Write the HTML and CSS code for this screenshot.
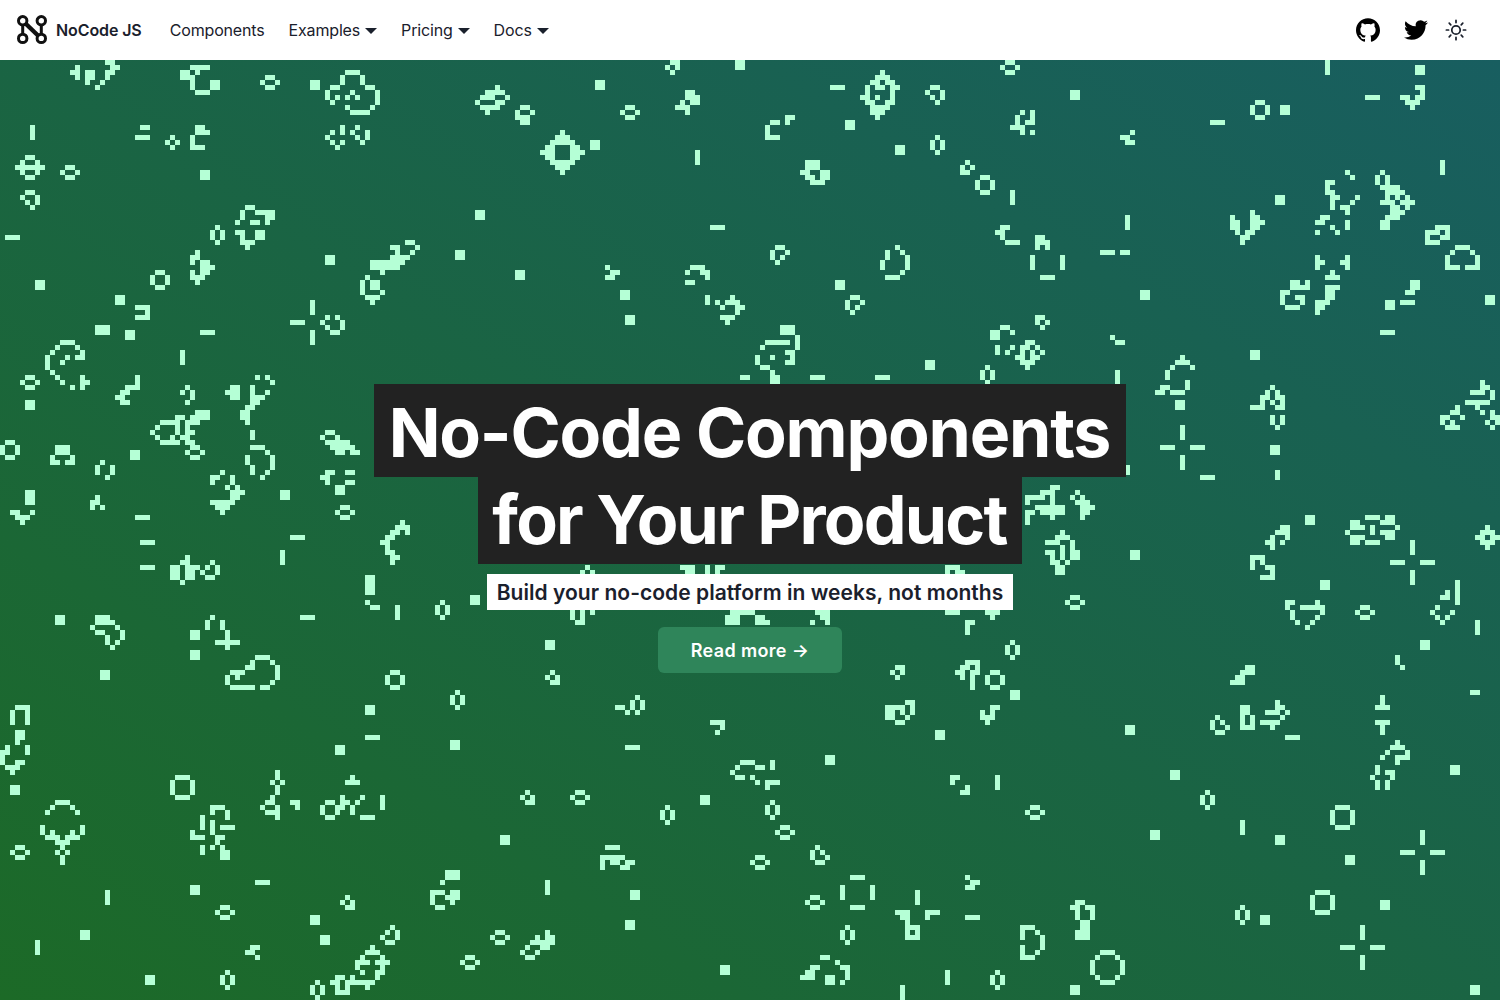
FILE: index.html
```html
<!DOCTYPE html>
<html lang="en">
<head>
<meta charset="utf-8">
<title>NoCode JS</title>
<link rel="stylesheet" href="styles.css">
</head>
<body>
<header class="nav">
  <a class="brand" href="#">
    <svg class="brand-mark" viewBox="0 0 32 32"><g fill="none" stroke="currentColor" stroke-width="3"><circle cx="6.7" cy="6.8" r="4.2"/><circle cx="25.3" cy="6.8" r="4.2"/><circle cx="6.7" cy="24.4" r="4.2"/><circle cx="25.3" cy="24.4" r="4.2"/><path d="M6.7 10v11M25.3 10v11"/><path stroke-width="4.4" d="M9.5 9.5l13 12.5"/></g></svg>
    <span>NoCode JS</span>
  </a>
  <nav class="links">
    <a href="#">Components</a>
    <a href="#">Examples<svg class="caret" viewBox="0 0 12 6"><path d="M0 0h12L6 6z"/></svg></a>
    <a href="#">Pricing<svg class="caret" viewBox="0 0 12 6"><path d="M0 0h12L6 6z"/></svg></a>
    <a href="#">Docs<svg class="caret" viewBox="0 0 12 6"><path d="M0 0h12L6 6z"/></svg></a>
  </nav>
  <div class="actions">
    <svg class="icon" viewBox="0 0 24 24"><path d="M12 .297c-6.63 0-12 5.373-12 12 0 5.303 3.438 9.8 8.205 11.385.6.113.82-.258.82-.577 0-.285-.01-1.04-.015-2.04-3.338.724-4.042-1.61-4.042-1.61C4.422 18.07 3.633 17.7 3.633 17.7c-1.087-.744.084-.729.084-.729 1.205.084 1.838 1.236 1.838 1.236 1.07 1.835 2.809 1.305 3.495.998.108-.776.417-1.305.76-1.605-2.665-.3-5.466-1.332-5.466-5.93 0-1.31.465-2.38 1.235-3.22-.135-.303-.54-1.523.105-3.176 0 0 1.005-.322 3.3 1.23.96-.267 1.98-.399 3-.405 1.02.006 2.04.138 3 .405 2.28-1.552 3.285-1.23 3.285-1.23.645 1.653.24 2.873.12 3.176.765.84 1.23 1.91 1.23 3.22 0 4.61-2.805 5.625-5.475 5.92.42.36.81 1.096.81 2.22 0 1.606-.015 2.896-.015 3.286 0 .315.21.69.825.57C20.565 22.092 24 17.592 24 12.297c0-6.627-5.373-12-12-12"/></svg>
    <svg class="icon" viewBox="0 0 24 24"><path d="M23.953 4.57a10 10 0 01-2.825.775 4.958 4.958 0 002.163-2.723c-.951.555-2.005.959-3.127 1.184a4.92 4.92 0 00-8.384 4.482C7.69 8.095 4.067 6.13 1.64 3.162a4.822 4.822 0 00-.666 2.475c0 1.71.87 3.213 2.188 4.096a4.904 4.904 0 01-2.228-.616v.06a4.923 4.923 0 003.946 4.827 4.996 4.996 0 01-2.212.085 4.936 4.936 0 004.604 3.417 9.867 9.867 0 01-6.102 2.105c-.39 0-.779-.023-1.17-.067a13.995 13.995 0 007.557 2.209c9.053 0 13.998-7.496 13.998-13.985 0-.21 0-.42-.015-.63A9.935 9.935 0 0024 4.59z"/></svg>
    <svg class="sun" viewBox="0 0 24 24"><circle cx="12" cy="12" r="4.6"/><path d="M12 1.5v2.4M12 20.1v2.4M4.6 4.6l1.7 1.7M17.7 17.7l1.7 1.7M1.5 12h2.4M20.1 12h2.4M4.6 19.4l1.7-1.7M17.7 6.3l1.7-1.7"/></svg>
  </div>
</header>
<main class="hero">
  <svg class="life" viewBox="0 11.5 300 188" aria-hidden="true">
    <path class="life-rows" d="M21 12h2M15 13h1M22 13h2M14 14h2M17 14h2M21 14h2M15 15h1M17 15h2M21 15h1M17 16h1M20 16h1M19 17h1
M38 13h4M36 14h2M39 14h1M36 15h3M38 16h1M38 17h1M39 18h3
M69 14h3M68 15h1M72 15h1M68 16h1M72 16h1M66 17h2M73 17h2M65 18h1M70 18h1M75 18h1M65 19h1M67 19h1M69 19h1M71 19h1M75 19h1M66 20h1M75 20h1M69 21h1M74 21h1M70 22h4
M6.5 24.5v3M28 25h2M27 27h3M34 27h1M33 28h1M35 28h1M34 29h1
M39 25h2M39 26h3M38 27h1M38 28h1M38 29h3
M68 25h1M71 25h1M66 26h1M68 26h1M70 26h1M73 26h1M65 27h1M71 27h1M73 27h1M66 28h1M68 28h1M72 28h1M67 29h1
M5 31h2M4 32h1M7 32h1M3 33h6M4 34h1M7 34h1M5 35h2
M5 38h2M4 39h1M7 39h1M5 40h1M7 40h1M6 41h1M1 47h3
M49 41h2M48 42h1M51 42h4M48 43h1M53 43h2M47 44h1M50 44h2M53 44h1M47 46h2M51 46h2M48 47h1M51 47h2M48 48h3M49 49h1
M39 50h1M38 51h2M38 52h1M40 52h2M40 53h3M38 54h1M40 54h2M38 55h3M39 56h1
M81 48h2M78 49h2M83 49h1M79 50h1M82 50h1M78 51h4M74 52h7M74 53h6M76 54h1
M73 55h1M72 56h1M74 56h2M72 57h1M74 57h2M72 58h1M76 58h1M73 59h3M74 60h1
M27 61h3M29 62h1M27 63h3M40 66h3M36.5 69.5v3
M62.5 59.5v3M58 64h3M62.5 65.5v3M65 63h1M67 63h1M64 64h1M68 64h1M65 65h1M68 65h1M66 66h2
M12 68h3M11 69h1M15 69h1M10 70h1M16 70h1M9 71h1M13 71h1M15 71h2M9 72h1M12 72h1M9 73h1M10 74h1M11 75h1M12 76h1M14 77h1
M16 75h1M16 76h2M16 77h1M27 75h1M27 76h1M25 77h3M24 78h2M23 79h2M24 80h2
M37 77h1M36 78h1M38 78h1M38 79h1M37 80h1M46 77h2M45 78h3M46 79h2
M51 75h1M53 75h1M54 76h1M50 77h1M50 78h1M53 78h1M50 79h3M50 80h2M49 81h2M48 82h2M48 83h2M49 84h1M50.5 85.5v2
M39 82h3M35 83h2M38 83h4M32 84h4M37 84h3M31 85h1M35 85h1M37 85h1M30 86h1M35 86h1M37 86h2M31 87h1M34 87h1M36 87h2M32 88h4M37 88h2M38 89h2M37 90h1M40 90h1M38 91h2
M11 89h3M11 90h3M10 91h1M14 91h1M10 92h2M13 92h2M20 92h1M19 93h1M22 93h1M19 94h1M22 94h1M21 95h1
M50 89h3M53 90h1M49 91h1M54 91h1M49 92h1M54 92h1M50 93h1M54 93h1M50 94h1M53 94h1M52 95h1
M65 86h2M64 87h1M67 87h1M65 88h5M66 89h5M67 90h2M70 90h2M65 94h2M69 94h2M64 95h2M65 96h1M69 96h2
M44 94h1M42 95h2M46 95h1M42 96h1M46 96h1M45 97h1M47 97h1M46 98h3M46 99h2M42 100h5M43 101h3M44 102h1
M5 98h2M5 99h2M5 100h2M2 102h2M6 102h1M3 103h3M4 104h1M19 99h1M18 100h2M18 101h1M20 101h1
M27 103h3M28 108h3M28 113h3M58 107h3M56.5 109.5v3
M37 111h1M36 112h2M42 112h1M34 113h2M37 113h3M41 113h1M43 113h1M34 114h2M37 114h2M40 114h1M43 114h1M34 115h2M37 115h2M41 115h2M36 116h1
M73 120h1M74 121h2M79.5 120.5v3
M80 104h1M79 105h3M78 106h2M81 106h1M77 107h2M76 108h2M77 109h1M77 110h2M78 111h2M78 112h1
M19 123h3M19 124h4M18 125h1M23 125h1M19 126h2M24 126h1M21 127h1M24 127h1M21 128h1M23 128h1M22 129h1
M42 123h1M41 124h1M44 124h1M41 125h1M44 125h1M45 126h1M45 127h1M43 128h5M45 129h1M60 123h3
M51 131h3M50 132h1M54 132h1M49 133h2M55 133h1M46 134h3M55 134h1M45 135h1M47 135h1M55 135h1M45 136h1M54 136h1M46 137h5M52 137h2
M117 113h1M116 114h1M118 114h1M114 122h1M116 122h1M118 122h1M114 123h1M116 123h1M115 124h2
M136 113h3M141 113h1M143 113h2M137 114h2M141 114h1M143 114h1
M146 122h5M145 123h3M151 123h2M145 124h3M151 124h3
M154 74h1M154 75h2M154 76h2M162 75h3M175 75h3M148 75h2
M197 73h1M196 74h1M198 74h1M196 75h1M198 75h1M197 76h1M223.5 73.5v3
M236 71h1M235 72h3M234 73h1M238 73h1
M210 97h2M208 98h3M205 99h4M210 99h1M205 100h1M210 100h1M207 101h6M205 102h2M208 102h5M205 103h1M210 103h1M205 104h1
M215 98h1M214 99h1M216 99h1M215 100h3M216 101h3M216 102h2M216 103h1
M212 106h1M211 107h3M209 108h3M214 108h1M212 109h1M214 109h1M209 110h2M212 110h1M214 110h2M210 111h1M212 111h1M214 111h2M210 112h2M213 112h1M211 113h2M211 114h2
M225.5 92.5v2M189 113h3M189 114h1M191 114h2M189 122h3M197 122h3M198 123h1M163 122h3M164 123h2M162 124h1M165 124h1M193 124h2M193 125h1M193 126h1
M179 133h2M178 134h1M180 134h1M179 135h1M110 134h1M109 135h1M111 135h1M110 136h2
M193 132h3M192 133h2M195 133h1M191 134h2M194 134h2M192 135h1M194 135h1M194 136h1M194 137h1
M233.5 73.5v2M237.5 75.5v2M232 77h2M231 78h2M234 78h3M236.5 84.5v3M232 89h3M238 89h3M236.5 90.5v3M240 95h3
M254 77h1M253 78h1M255 78h1M252 79h2M255 79h2M252 80h1M254 80h1M256 80h1M250 81h3M255 81h2M254 83h1M256 83h1M254 84h1M256 84h1M255 85h1M255.5 93.5v2
M296 76h1M296 77h2M294 78h3M298 78h1M298 79h1M293 80h5M291 81h1M295 81h1M290 82h2M296 82h1M298 82h1M288 83h2M292 83h1M298 83h2M288 84h1M290 84h1M297 84h1M299 84h1M289 85h3M298 85h1
M256 105h2M255 106h3M254 107h1M257 107h1M253 108h2M256 108h1M254 109h1
M250 111h3M250 112h1M252 112h1M250 113h1M253 113h2M254 114h1M252 115h3
M273 103h3M277 103h2M270 104h2M276 104h3M270 105h3M274 105h1M279 105h1M269 106h1M274 106h1M276 106h3M270 107h3M277 107h2M270 108h2M273 108h3
M282.5 107.5v3M278 112h3M284 112h3M282.5 113.5v3M297 105h1M296 106h3M295 107h2M298 107h2M296 108h3M297 109h1
M257 120h2M263 120h1M257 121h1M260 121h5M258 122h1M264 122h1M258 123h1M263 123h1M259 124h1M262 124h1M261 125h1
M291.5 115.5v5M289 118h1M288 119h2M287 121h1M286 122h1M290 122h1M287 123h1M289 123h1M288 124h1M295.5 123.5v3M279.5 130.5v2M280 133h1
M249 133h2M248 134h3M247 135h2M246 136h3
M3 141h3M2 142h1M5 142h1M2 143h1M5 143h1M2 144h1M5 144h1M3 146h2M3 147h2M3 148h1M1 149h1M5 149h1M0 150h2M5 150h1M0 151h1M0 152h1M3 152h2M1 153h3M2 154h1
M11 160h3M10 161h1M14 161h1M9 162h1M15 162h1M8 165h1M16 165h1M8 166h1M10 166h1M14 166h1M16 166h1M9 167h3M13 167h3M11 168h3M12 169h1M11 170h1M13 170h1M12 171h1M12 172h1
M42 161h3M42 162h1M45 162h1M40 163h1M45 163h1M40 164h1M42 164h1M40 165h1M42 165h1M44 165h3M38 166h1M42 166h1M38 167h3M43 167h2M43 168h1M40 169h1M42 169h1M44 169h1M40 170h1M44 170h2M44 171h2
M55.5 153.5v2M54 156h1M56 156h1M55.5 156.5v2M54 159h1M53 160h2M58 160h2M52 161h1M55 161h1M59 161h1M53 162h3M55 163h1
M70 155h1M69 156h3M68 159h1M72 159h1M65 160h2M68 160h2M71 160h1M64 161h1M67 161h2M70 161h1M64 162h1M67 162h1M70 162h1M65 163h2M72 163h3M76.5 158.5v3
M73 147h3M51 176h3M21.5 177.5v3M7.5 187.5v3M50 189h2M49 190h2M51 191h1M69 179h1M68 180h1M70 180h1M69 181h2
M88 176h1M86 178h3M90 178h2M86 179h1M89 179h3M86 180h1M90 180h1M87 181h2M78 185h1M77 186h1M79 186h1M76 187h1M79 187h1M77 188h2
M74 189h1M73 190h3M72 191h1M76 191h1M71 192h3M75 192h3M71 193h1M76 193h1M72 194h1M75 194h2M67 195h2M70 195h1M75 195h1M66 196h2M69 196h6M67 197h1M69 197h1M73 197h1M67 198h3
M127 139h1M126 140h1M128 140h1M123 141h2M126 141h1M128 141h1M125 142h1M127 142h1M142 144h3M144 145h1M143 146h1M125 149h3
M105 158h1M104 159h1M106 159h1M105 160h2M121 169h3M120 171h5M120 172h1M122 172h2M125 172h2M120 173h1M124 173h2M109.5 175.5v3
M109 186h1M107 187h1M109 187h2M106 188h5M105 189h1M108 189h2M104 190h1M107 190h1M105 191h2
M148 152h3M154 152h1M147 153h1M151 153h2M154 153h1M146 154h1M147 155h2M150 155h1M151 156h1M153 156h3M153 157h1
M163 169h1M162 170h1M164 170h1M162 171h1M165 171h1M163 172h2M170 175h3M168.5 176.5v3M174.5 176.5v3M170 181h3
M164 191h2M167 192h1M162 193h2M168 193h2M161 194h2M169 194h1M160 195h3M169 195h1M168 196h1
M180.5 196.5v3M189.5 193.5v3M193 175h1M194 176h2M193 177h2M183.5 177.5v3
M179 182h3M180 183h2M181 184h1M181 185h3M181 186h1M183 186h1M181 187h3M185 182h3M185 183h1M193 183h3
M181 140h2M177 141h4M182 141h1M177 142h2M180 142h1M182 142h1M177 143h2M181 143h1M179 144h2M198 141h2M196 142h1M198 142h1M196 143h3M197 144h1
M190 155h2M190 156h1M193 157h1M192 158h2M199.5 154.5v3
M243 143h1M242 144h1M244 144h1M242 145h1M245 145h1M243 146h2M248 141h2M248 142h2M248 143h1M250 143h1M248 144h1M250 144h1M248 145h3
M255 140h1M255 141h2M253 142h3M257 142h1M256 143h1M252 144h4M254 145h1M257 147h3M276.5 138.5v2M275 141h3M275 144h3M276.5 144.5v2M294 138h2
M279 148h1M278 149h3M277 150h1M281 150h1M276 151h1M279 151h3M279 152h1M275.5 152.5v2M277 154h2M278 155h1M274 155h1M275.5 155.5v2M277.5 155.5v2
M248.5 163.5v3M284.5 165.5v3M280 170h3M286 170h3M284.5 171.5v3M272.5 184.5v3M268 189h3M274 189h3M272.5 190.5v3
M215 180h2M214 181h2M217 181h2M215 182h1M218 182h1M215 183h1M218 183h1M216 184h2M216 185h2M215 186h3M215 187h3
M204 185h3M204 186h1M207 186h1M204 187h1M208 187h1M208 188h1M204 189h1M208 189h1M204 190h1M207 190h1M204 191h3
M220 190h3M219 191h1M223 191h1M218 192h1M224 192h1M218 193h1M224 193h1M218 194h1M224 194h1M219 195h1M223 195h1M220 196h3
M134 12h2M133 13h1M135 13h1M134 14h1M99 17h1M97 18h4M96 19h3M101 19h1M95 20h1M99 20h2M96 21h4M97 22h1
M104 21h2M103 22h1M106 22h1M103 23h3M104 24h2M137 18h2M137 19h3M136 20h1M138 20h2M135 21h3M137 22h1
M112 26h1M111 27h3M110 28h5M109 29h2M114 29h2M108 30h3M114 30h3M109 31h2M114 31h2M110 32h5M111 33h3M112 34h1M139.5 29.5v3
M157 23h2M154 24h2M157 24h1M153 25h1M153 26h1M153 27h3M121 53h1M122 54h2M121 55h2M142 45h3
M155 49h2M154 50h1M157 50h1M154 51h1M156 51h1M155 52h1M138 53h3M137 54h1M140 54h2M141 55h1M137 56h2M141.5 58.5v2
M146 59h1M143 60h1M145 60h3M144 61h1M147 61h2M147 62h1M144 63h3M145 64h1
M156 65h3M156 66h3M159 67h1M153 68h5M159 68h1M152 69h1M159 69h1M157 70h2M151 71h1M154 71h1M158 71h1M151 72h1M157 72h2M152 73h2M154 74h1M154 75h2
M265.5 11.5v3M176 14h1M175 15h3M174 16h2M177 16h2M173 17h1M175 17h2M178 17h2M173 18h1M178 18h1M172 19h2M175 19h1M178 19h1M173 20h2M177 20h2M174 21h4M174 22h3M175 23h1M166 17h3
M186 17h2M185 18h1M188 18h1M186 19h1M188 19h1M187 20h1M204 22h1M206 22h1M203 23h1M206 23h1M203 24h1M205 24h2M202 25h3M204 26h1M206 26h1
M226 26h1M224 27h2M225 28h2M242 24h3M273 19h3M283 17h2M284 18h1M280 19h2M283 19h2M281 20h3M282 21h1
M161 32h3M161 33h3M160 34h2M164 34h2M161 35h2M164 35h2M162 36h3M193 32h1M192 33h1M194 33h1M192 34h2M202.5 37.5v3M225.5 42.5v3
M200 45h2M199 46h2M200 47h1M201 48h3M207 47h2M207 48h3M207 49h1M209 49h1M206.5 50.5v3M212.5 50.5v3M208 55h3M220 50h3M224 50h2
M179 49h1M177.5 49.5v2M180 50h1M181.5 50.5v3M176.5 51.5v2M180 54h1M177 55h3M170 59h2M169 60h1M172 60h1M169 61h1M171 61h1M170 62h1
M207 63h2M207 64h1M209 64h1M208 65h1M200 65h2M198 66h2M202 66h1M198 67h2M199.5 68.5v2M202 69h1M201 70h1
M205 68h2M204 69h2M207 69h1M204 70h1M206 70h1M208 70h1M203 71h2M206 71h2M204 72h3M205 73h1M222 67h1M223 68h2
M288.5 31.5v3M269 34h1M270 35h1M276 34h1M275 35h1M277 35h1M275 36h1M277 36h1M276 37h4M277 38h4M277 39h1M279 39h1M281 39h1M276 40h3M280 40h3M278 41h2M281 41h1M278 42h3M277 43h3M276 44h2M276 45h2
M265 36h2M265 37h1M265 38h2M266 39h2M271 39h1M266 40h1M270 40h1M266 41h1M268 41h2M269 42h1
M250 42h1M246 43h1M250 43h2M246 44h2M250 44h3M246 45h2M250 45h2M247 46h1M249 46h2M248 47h2M248 48h1
M264 43h2M263 44h2M269 44h1M266 45h1M269 45h1M263 46h1M267 46h1M287 45h3M285 46h3M289 46h1M285 47h1M288 47h2M285 48h3
M291 49h3M290 50h1M294 50h1M289 51h1M295 51h1M289 52h1M295 52h1M289 53h3M293 53h3M263 51h1M269 51h1M263 52h2M268 52h2M263 53h1M269 53h1M266 54h1M265 55h3
M258 56h2M261 56h1M258 57h4M256 58h2M256 59h1M259 59h2M256 60h1M260 60h1M257 61h3M265 57h3M265 58h2M265 59h2M263 60h3M263 61h2M263 62h1
M282 56h2M282 57h2M281 58h2M280 60h3M276 66h3
M53 15h2m-3 1h1m2 0h1m-3 1h2M13 33h2m-3 1h1m2 0h1m-3 1h2M5 75h2m-3 1h1m2 0h1m-3 1h2M68 101h2m-3 1h1m2 0h1m-3 1h2M3 169h2m-3 1h1m2 0h1m-3 1h2M44 181h2m-3 1h1m2 0h1m-3 1h2M93 191h2m-3 1h1m2 0h1m-3 1h2M99 186h2m-3 1h1m2 0h1m-3 1h2M115 158h2m-3 1h1m2 0h1m-3 1h2M156 165h2m-3 1h1m2 0h1m-3 1h2M151 171h2m-3 1h1m2 0h1m-3 1h2M162 179h2m-3 1h1m2 0h1m-3 1h2M214 119h2m-3 1h1m2 0h1m-3 1h2M125 21h2m-3 1h1m2 0h1m-3 1h2M201 12h2m-3 1h1m2 0h1m-3 1h2M272 121h2m-3 1h1m2 0h1m-3 1h2M206 161h2m-3 1h1m2 0h1m-3 1h2
M43 45h1m-2 1h1m1 0h1m-3 1h1m1 0h1m-2 1h1M88 120h1m-2 1h1m1 0h1m-3 1h1m1 0h1m-2 1h1M91 138h1m-2 1h1m1 0h1m-3 1h1m1 0h1m-2 1h1M45 194h1m-2 1h1m1 0h1m-3 1h1m1 0h1m-2 1h1M63 196h1m-2 1h1m1 0h1m-3 1h1m1 0h1m-2 1h1M133 161h1m-2 1h1m1 0h1m-3 1h1m1 0h1m-2 1h1M154 160h1m-2 1h1m1 0h1m-3 1h1m1 0h1m-2 1h1M169 185h1m-2 1h1m1 0h1m-3 1h1m1 0h1m-2 1h1M202 128h1m-2 1h1m1 0h1m-3 1h1m1 0h1m-2 1h1M187 27h1m-2 1h1m1 0h1m-3 1h1m1 0h1m-2 1h1M241 158h1m-2 1h1m1 0h1m-3 1h1m1 0h1m-2 1h1M248 181h1m-2 1h1m1 0h1m-3 1h1m1 0h1m-2 1h1M199 194h1m-2 1h1m1 0h1m-3 1h1m1 0h1m-2 1h1
M31 54h2m-3 1h1m2 0h1m-4 1h1m2 0h1m-3 1h2M1 88h2m-3 1h1m2 0h1m-4 1h1m2 0h1m-3 1h2M78 134h2m-3 1h1m2 0h1m-4 1h1m2 0h1m-3 1h2M251 20h2m-3 1h1m2 0h1m-4 1h1m2 0h1m-3 1h2M198 134h2m-3 1h1m2 0h1m-4 1h1m2 0h1m-3 1h2M196 35h2m-3 1h1m2 0h1m-4 1h1m2 0h1m-3 1h2
M35 155h3m-4 1h1m3 0h1m-5 1h1m3 0h1m-5 1h1m3 0h1m-4 1h3M267 161h3m-4 1h1m3 0h1m-5 1h1m3 0h1m-5 1h1m3 0h1m-4 1h3M263 178h3m-4 1h1m3 0h1m-5 1h1m3 0h1m-5 1h1m3 0h1m-4 1h3"/>
    <path class="life-blocks" d="M42 16.5h2M62 16.5h2M40 34.5h2M65 51.5h2M7 56.5h2M23 59.5h2M25 66.5h2M19 65.5h3M5 80.5h2M26 90.5h2M56 98.5h2M67 97.5h2M38 126.5h2M38 130.5h2M11 123.5h2M20 134.5h2M109 128.5h2M94 119.5h2M226 110.5h2M235 80.5h2M254 89.5h2M261 103.5h2M264 116.5h2M284 128.5h2M73 115.5h2M73 117.5h2M73 141.5h2M67 149.5h2M90 148.5h2M2 157.5h2M38 177.5h2M16 186.5h2M29 195.5h2M62 183.5h2M64 187.5h2M89 174.5h3M202 138.5h2M225 145.5h2M234 154.5h2M230 166.5h2M255 167.5h2M269 171.5h2M276 180.5h2M252 183.5h2M290 153.5h2M214 197.5h2M294 197.5h2M140 159.5h2M100 167.5h2M126 178.5h2M125 184.5h2M144 193.5h2M187 146.5h2M165 151.5h2M165 195.5h2M119 16.5h2M118 28.5h2M95 42.5h2M91 50.5h2M103 54.5h2M124 58.5h2M125 63.5h2M147 12.5h2M283 13.5h2M214 18.5h2M169 24.5h2M179 29.5h2M167 56.5h2M228 58.5h2M250 70.5h2M185 72.5h2M255 39.5h2M256 21.5h2M277 60.5h2M297 59.5h2"/>
  </svg>
  <div class="hero-content">
    <h1 class="title"><span class="title-bg">No-Code Components<br><span class="title-tight">for Your Product</span></span></h1>
    <p class="tagline">Build your no-code platform in weeks, not months</p>
    <a class="cta" href="#">Read more →</a>
  </div>
</main>
</body>
</html>
```
FILE: styles.css
```css
* { box-sizing: border-box; }
html, body { margin: 0; height: 100%; }
body {
  font-family: Inter, "Liberation Sans", sans-serif;
  color: #1a202c;
  background: #fff;
  overflow: hidden;
  display: flex;
  flex-direction: column;
}
a { color: inherit; text-decoration: none; }

.nav {
  height: 60px;
  flex: none;
  display: flex;
  align-items: center;
  padding: 0 33px 0 16px;
  background: #fff;
}
.brand {
  display: flex;
  align-items: center;
  gap: 8px;
  font-size: 16px;
  font-weight: 600;
  letter-spacing: -0.1px;
  margin-right: 28px;
}
.brand-mark { width: 32px; height: 32px; color: #111; }
.links { display: flex; align-items: center; gap: 24px; font-size: 16px; letter-spacing: -0.16px; }
.links a { display: flex; align-items: center; gap: 5px; }
.caret { width: 12px; height: 6px; fill: #1a202c; margin-top: 2px; }
.actions { margin-left: auto; display: flex; align-items: center; gap: 24px; }
.icon { width: 24px; height: 24px; fill: #000; display: block; }
.sun {
  width: 22px;
  height: 22px;
  margin-left: -7px;
  fill: none;
  stroke: #1a202c;
  stroke-width: 1.9;
  stroke-linecap: round;
}

.hero {
  flex: 1;
  position: relative;
  display: flex;
  justify-content: center;
  align-items: flex-start;
  padding-top: 329px;
  background: linear-gradient(to top right, #1c6a27, #185e60);
}
.life {
  position: absolute;
  inset: 0;
  width: 100%;
  height: 100%;
}
.life path { fill: none; stroke: #b5ffd6; shape-rendering: crispEdges; }
.life-rows { stroke-width: 1; }
.life-blocks { stroke-width: 2; }

.hero-content {
  position: relative;
  display: flex;
  flex-direction: column;
  align-items: center;
}
.title {
  margin: 0;
  font-size: 68px;
  line-height: 87px;
  font-weight: 700;
  letter-spacing: -1.2px;
  text-align: center;
  color: #fff;
}
.title-bg {
  background: #222;
  padding: 7.4px 15.5px 4.4px 14.5px;
  -webkit-box-decoration-break: clone;
  box-decoration-break: clone;
}
.title-tight { letter-spacing: -1.8px; }
.tagline {
  margin: 11px 0 0;
  padding: 0 10px;
  height: 36px;
  line-height: 38px;
  font-size: 21px;
  font-weight: 600;
  letter-spacing: 0.04px;
  color: #1a202c;
  background: #fff;
}
.cta {
  margin-top: 17px;
  height: 46px;
  padding: 0 33px;
  display: flex;
  align-items: center;
  border-radius: 6px;
  background: #2f855a;
  color: #fff;
  font-size: 18px;
  font-weight: 600;
  letter-spacing: 0.35px;
}
```
